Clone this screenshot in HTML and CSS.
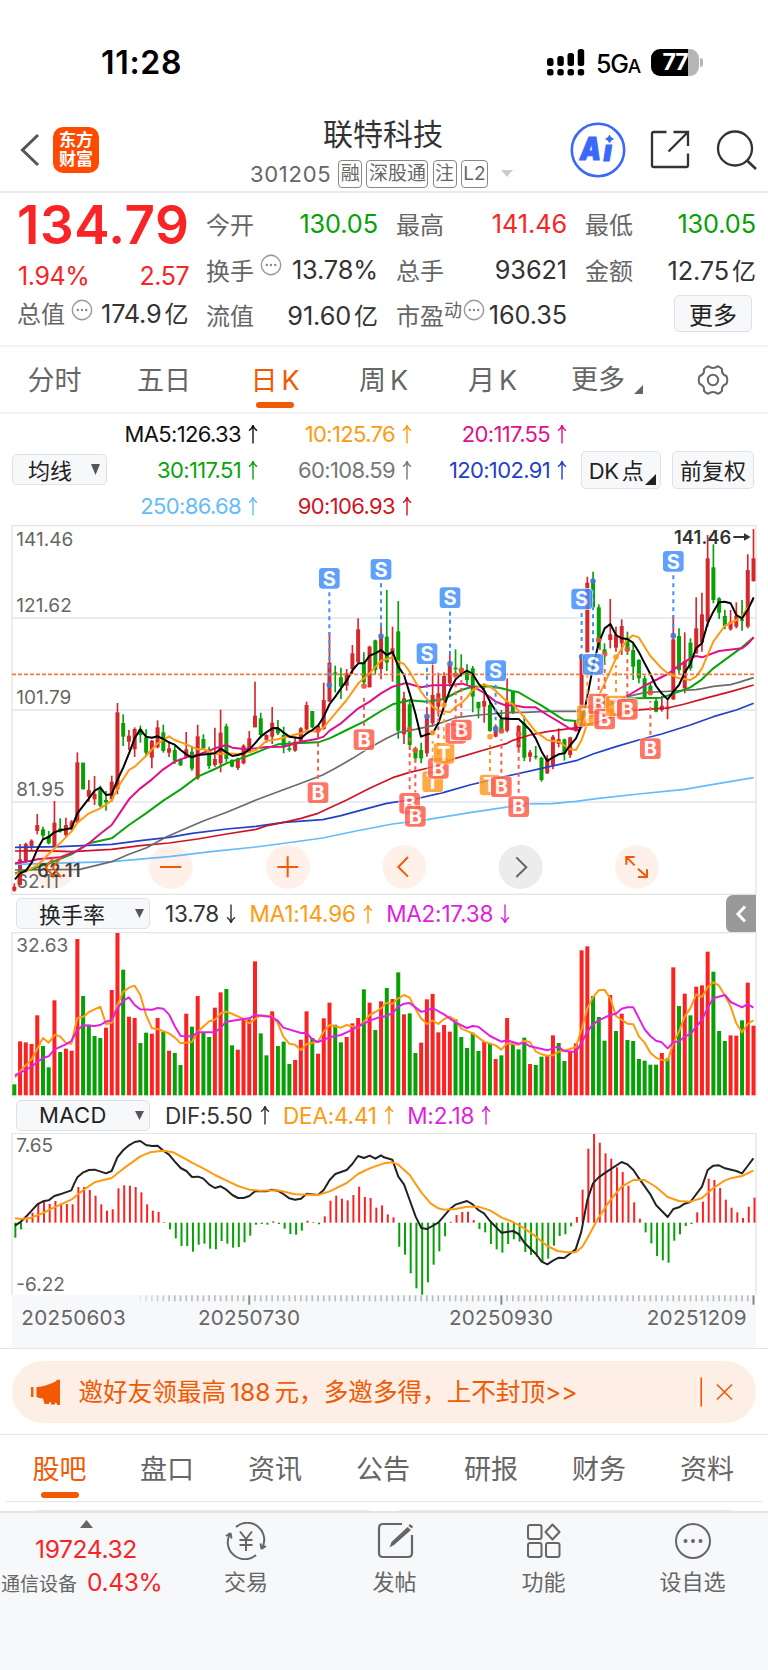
FILE: index.html
```html
<!DOCTYPE html>
<html lang="zh-CN">
<head>
<meta charset="utf-8">
<title>联特科技 301205</title>
<link rel="stylesheet" href="styles.css">
</head>
<body>
<svg class="defs" width="0" height="0">
  <symbol id="up" viewBox="0 0 10 20"><path d="M5 19.5V1.2M1 6.6Q4.2 4.6 5 1.2Q5.8 4.6 9 6.6" fill="none" stroke="currentColor" stroke-width="1.4"/></symbol>
  <symbol id="down" viewBox="0 0 10 20"><path d="M5 .5V18.8M1 13.4Q4.2 15.4 5 18.8Q5.8 15.4 9 13.4" fill="none" stroke="currentColor" stroke-width="1.4"/></symbol>
  <symbol id="info" viewBox="0 0 22 22"><circle cx="11" cy="11" r="9.7" fill="none" stroke="#999" stroke-width="1.4"/><g fill="#888"><circle cx="6.8" cy="11" r="1.2"/><circle cx="11" cy="11" r="1.2"/><circle cx="15.2" cy="11" r="1.2"/></g></symbol>
</svg>

<header class="status">
  <span class="clock">11:28</span>
  <div class="status-right">
    <svg width="38" height="27" viewBox="0 0 38 27"><g><rect x="0" y="9" width="6.500" height="8" rx="2.500"/><rect x="10.300" y="7" width="6.500" height="10" rx="2.500"/><rect x="20.500" y="4" width="6.500" height="13" rx="2.500"/><rect x="30.700" y="0" width="6.500" height="17" rx="2.500"/><rect x="0" y="20" width="6.500" height="6.500" rx="2.500"/><rect x="10.300" y="20" width="6.500" height="6.500" rx="2.500"/><rect x="20.500" y="20" width="6.500" height="6.500" rx="2.500"/><rect x="30.700" y="20" width="6.500" height="6.500" rx="2.500"/></g></svg>
    <span class="net">5G<small>A</small></span>
    <span class="battery"><b>77</b></span><i class="nub"></i>
  </div>
</header>

<nav class="topbar">
  <svg class="back" width="20" height="34" viewBox="0 0 20 34"><path d="M18 2L2.500 17L18 32" fill="none" stroke="#555" stroke-width="3"/></svg>
  <div class="logo"><span>东方</span><span>财富</span></div>
  <div class="heading">
    <h1>联特科技</h1>
    <div class="sub"><span class="code">301205</span><span class="tag">融</span><span class="tag">深股通</span><span class="tag">注</span><span class="tag">L2</span><i class="tri-light"></i></div>
  </div>
  <svg class="ai" width="56" height="56" viewBox="0 0 56 56"><circle cx="28" cy="28" r="26.200" fill="#fff" stroke="#3a68f9" stroke-width="2.600"/><g fill="#3a68f9" stroke="#3a68f9" font-weight="900" font-style="italic" font-size="31"><text x="10" y="38" textLength="21" lengthAdjust="spacingAndGlyphs" stroke-width="1.200">A</text><text x="33.500" y="38.500" font-size="28" stroke-width="1">ı</text></g><path d="M39.500 12.500Q40.600 16 44 17Q40.600 18 39.500 21.500Q38.400 18 35 17Q38.400 16 39.500 12.500Z" fill="#3a68f9"/></svg>
  <svg class="share" width="40" height="40" viewBox="0 0 40 40"><path d="M16.500 2H3.800Q2 2 2 3.800V35.200Q2 37 3.800 37H36.200Q38 37 38 35.200V23.500M23.500 2H38V16M37.500 2.500L18.500 21.500" fill="none" stroke="#333" stroke-width="2.300"/></svg>
  <svg class="find" width="41" height="40" viewBox="0 0 41 40"><circle cx="19" cy="18.500" r="17" fill="none" stroke="#333" stroke-width="2.300"/><path d="M31 30.500L40 39" stroke="#333" stroke-width="2.600"/></svg>
</nav>

<section class="quote">
  <div class="last">
    <div class="price">134.79</div>
    <div class="chg"><span>1.94%</span><span>2.57</span></div>
    <div class="kv"><label>总值</label><svg class="inf"><use href="#info"/></svg><b>174.9<em>亿</em></b></div>
  </div>
  <div class="col">
    <div class="kv"><label>今开</label><b class="green">130.05</b></div>
    <div class="kv"><label>换手</label><svg class="inf"><use href="#info"/></svg><b>13.78%</b></div>
    <div class="kv"><label>流值</label><b>91.60<em>亿</em></b></div>
  </div>
  <div class="col">
    <div class="kv"><label>最高</label><b class="red">141.46</b></div>
    <div class="kv"><label>总手</label><b>93621</b></div>
    <div class="kv pe"><label>市盈<sup>动</sup></label><svg class="inf"><use href="#info"/></svg><b>160.35</b></div>
  </div>
  <div class="col">
    <div class="kv"><label>最低</label><b class="green">130.05</b></div>
    <div class="kv"><label>金额</label><b>12.75<em>亿</em></b></div>
    <button class="btn more">更多</button>
  </div>
</section>

<nav class="periods">
  <span>分时</span><span>五日</span><span class="on">日<i>K</i></span><span>周<i>K</i></span><span>月<i>K</i></span>
  <span class="pmore">更多<svg width="9" height="9"><path d="M9 0V9H0Z" fill="#666"/></svg></span>
  <svg class="gear" width="32" height="32" viewBox="0 0 32 32"><path d="M11 2.200Q16 5.600 21 2.200Q23.500 3.200 25 5.200Q24.300 10.200 29.500 12.200Q31 16 29.500 19.800Q24.300 21.800 25 26.800Q23.500 28.800 21 29.800Q16 26.400 11 29.800Q8.500 28.800 7 26.800Q7.700 21.800 2.500 19.800Q1 16 2.500 12.200Q7.700 10.200 7 5.200Q8.500 3.200 11 2.200Z" fill="none" stroke="#666" stroke-width="2" stroke-linejoin="round"/><circle cx="16" cy="16" r="5.200" fill="none" stroke="#666" stroke-width="2"/></svg>
</nav>

<section class="mas">
  <button class="btn pick"><span>均线</span><svg width="9" height="11"><path d="M0 0H9L4.500 11Z" fill="#555"/></svg></button>
  <div class="ma-grid">
    <span class="c-black">MA5:126.33<svg><use href="#up"/></svg></span><span class="c-orange">10:125.76<svg><use href="#up"/></svg></span><span class="c-pink">20:117.55<svg><use href="#up"/></svg></span>
    <span class="c-green">30:117.51<svg><use href="#up"/></svg></span><span class="c-gray">60:108.59<svg><use href="#up"/></svg></span><span class="c-blue">120:102.91<svg><use href="#up"/></svg></span>
    <span class="c-sky">250:86.68<svg><use href="#up"/></svg></span><span class="c-crimson">90:106.93<svg><use href="#up"/></svg></span>
  </div>
  <button class="btn dk"><span>DK<em>点</em></span><svg width="11" height="11"><path d="M11 0V11H0Z" fill="#222"/></svg></button>
  <button class="btn adj"><span>前复权</span></button>
</section>

<svg id="price" class="chart" width="768" height="370" viewBox="0 15 2304 1110"></svg>

<section class="ind">
  <button class="btn sel"><span>换手率</span><svg width="9" height="9"><path d="M0 0H9L4.500 9Z" fill="#555"/></svg></button>
  <span class="c-ink">13.78<svg><use href="#down"/></svg></span>
  <span class="c-orange">MA1:14.96<svg><use href="#up"/></svg></span>
  <span class="c-magenta">MA2:17.38<svg><use href="#down"/></svg></span>
  <button class="fold"><svg width="12" height="20" viewBox="0 0 12 20"><path d="M10 2.500L3 10L10 17.500" fill="none" stroke="#fff" stroke-width="3"/></svg></button>
</section>
<svg id="turnover" class="chart" width="768" height="165" viewBox="0 126 2304 495"></svg>

<section class="ind macd">
  <button class="btn sel"><span class="lat">MACD</span><svg width="9" height="9"><path d="M0 0H9L4.500 9Z" fill="#555"/></svg></button>
  <span class="c-ink">DIF:5.50<svg><use href="#up"/></svg></span>
  <span class="c-orange">DEA:4.41<svg><use href="#up"/></svg></span>
  <span class="c-magenta">M:2.18<svg><use href="#up"/></svg></span>
</section>
<svg id="macd" class="chart" width="768" height="215" viewBox="0 129 2304 645"></svg>

<section class="promo">
  <div class="banner">
    <svg width="30" height="27" viewBox="0 0 30 27"><path d="M1.200 8V18" stroke="#f15a04" stroke-width="2.400"/><path d="M5.500 8Q15 7.500 25.500 2V.8H29V26H26V24.500L24 23.500V25.500H20V23L18 23.500V25H13.500L12 19.500Q8 19 5.500 18Z" fill="#f15a04"/></svg>
    <p>邀好友领最高<i>188</i>元，多邀多得，上不封顶&gt;&gt;</p>
    <svg class="close" width="34" height="30" viewBox="0 0 34 30"><path d="M1.200 .5V29.500M17 7.500L32 22.500M32 7.500L17 22.500" fill="none" stroke="#f15a04" stroke-width="1.600"/></svg>
  </div>
</section>

<nav class="tabs"><span class="on">股吧</span><span>盘口</span><span>资讯</span><span>公告</span><span>研报</span><span>财务</span><span>资料</span></nav>
<div class="peek"><i></i><i></i></div>

<footer class="dock">
  <div class="index">
    <svg width="13" height="8"><path d="M6.500 0L13 8H0Z" fill="#666"/></svg>
    <b>19724.32</b>
    <div><span>通信设备</span><b>0.43%</b></div>
  </div>
  <div class="act"><svg width="42" height="38" viewBox="0 0 42 38"><g fill="none" stroke="#666" stroke-width="2"><path d="M11 5A17 17 0 0 1 36.500 27M36.500 27L35.500 21.500M36.500 27L41 24M31 33A17 17 0 0 1 5.500 11M5.500 11L6.500 16.500M5.500 11L1 14"/><path d="M15 9.500L21 17L27 9.500M21 17V29M14.500 18H27.500M14.500 23H27.500"/></g></svg><span>交易</span></div>
  <div class="act"><svg width="38" height="38" viewBox="0 0 38 38"><path d="M26 2H7Q3 2 3 6V31Q3 35 7 35H32Q36 35 36 31V13" fill="none" stroke="#666" stroke-width="2.200"/><path d="M31.500 5L35 8L18 23L13.500 25.500L15.500 20Z" fill="#666"/><path d="M34 2L37 4.500L36 6.500L32.500 4Z" fill="#666"/></svg><span>发帖</span></div>
  <div class="act"><svg width="38" height="38" viewBox="0 0 38 38"><g fill="none" stroke="#666" stroke-width="2"><rect x="3" y="3" width="13.500" height="14" rx="2"/><rect x="3" y="21" width="13.500" height="14" rx="2"/><rect x="21" y="21" width="13.500" height="14" rx="2"/><path d="M27.500 2.500L34.500 10L27.500 17.500L20.500 10Z" stroke-linejoin="round"/></g></svg><span>功能</span></div>
  <div class="act"><svg width="38" height="38" viewBox="0 0 38 38"><circle cx="19" cy="19" r="17" fill="none" stroke="#666" stroke-width="2"/><g fill="#666"><circle cx="11.500" cy="19" r="2"/><circle cx="19" cy="19" r="2"/><circle cx="26.500" cy="19" r="2"/></g></svg><span>设自选</span></div>
</footer>
<script src="chart.js"></script>
</body>
</html>
```
FILE: styles.css
```css
* { box-sizing: border-box; }
body { margin: 0; width: 768px; height: 1670px; overflow: hidden; background: #fff; color: #333; font-family: Inter, "Noto Sans CJK SC", sans-serif; }
b, em, i { font-weight: 400; font-style: normal; }
svg { display: block; flex: none; }
.defs { position: absolute; }
.btn { font: inherit; color: #222; background: #f7f8fa; border: 1.500px solid #dfe1e6; border-radius: 5px; padding: 0; display: flex; align-items: center; justify-content: center; white-space: nowrap; }
.btn > span { margin-top: -2px; }
.red { color: #f92426; }
.green { color: #05a105; }

.status { height: 108px; padding: 16px 65px 0 101px; display: flex; justify-content: space-between; align-items: center; color: #000; }
.clock { font-size: 32px; font-weight: 600; letter-spacing: .7px; }
.status-right { display: flex; align-items: center; }
.net { font-size: 25px; font-weight: 500; margin: 3px 0 0 11px; width: 55px; letter-spacing: -1.200px; white-space: nowrap; }
.net small { font-size: 19px; }
.battery { width: 48px; height: 27px; border-radius: 9px; background: linear-gradient(90deg, #000 78%, #b5b5b5 78%); color: #fff; text-align: center; line-height: 27px; }
.battery b { font-size: 23px; font-weight: 700; letter-spacing: -1px; }
.nub { width: 3px; height: 9px; margin-left: 1px; background: #b5b5b5; border-radius: 0 3px 3px 0; }

.topbar { height: 85px; border-bottom: 2px solid #e9e9e9; display: grid; grid-template-columns: 53px 46px 471px 56px 64px 1fr; align-items: center; }
.back { margin-left: 20px; }
.logo { width: 46px; height: 46px; border-radius: 10px; background: #ff4a02; color: #fff; font-size: 17px; font-weight: 700; line-height: 19px; display: flex; flex-direction: column; align-items: center; justify-content: center; }
.heading { padding: 5px 0 0 94px; }
.heading h1 { margin: -1px 0 0 65px; padding-left: 10px; width: 240px; font-size: 30px; font-weight: 400; line-height: 36px; text-align: center; white-space: nowrap; }
.sub { display: flex; align-items: center; margin: 8px 0 0 57px; gap: 4.200px; height: 28px; font-size: 19px; color: #666; }
.code { font-size: 22px; letter-spacing: .7px; width: 84px; margin-right: 0; }
.tag { height: 28px; line-height: 25px; border: 1.500px solid #888; border-radius: 4px; padding: 0 1.500px; white-space: nowrap; }
.tri-light { border: 6.500px solid transparent; border-top: 7px solid #ccc; border-bottom: 0; margin-left: 9px; }
.share { margin-left: 24px; }
.find { margin-left: 26px; }

.quote { height: 154px; border-bottom: 2px solid #f4f4f4; padding: 8px 12px 0 17px; display: grid; grid-template-columns: 171px 172px 171px 171px; column-gap: 18px; }
.last { display: grid; grid-template-rows: 49px 41px 46px; width: 171px; }
.price { font-size: 53px; font-weight: 600; line-height: 49px; color: #f92426; letter-spacing: .5px; }
.chg { display: flex; justify-content: space-between; align-items: center; font-size: 25px; color: #f92426; letter-spacing: -.4px; padding: 11px 0 0 1px; }
.col { display: grid; grid-template-rows: 46px 45px 46px; margin-top: -1px; }
.kv { display: flex; align-items: center; height: 46px; font-size: 24px; letter-spacing: 0; white-space: nowrap; }
.last .kv { height: 46px; margin-top: -2px; }
.kv label { color: #666; letter-spacing: 0; }
.kv b { margin-left: auto; font-size: 25.300px; letter-spacing: -.1px; }
.kv em { margin-left: 3px; font-size: 24px; }
.inf { width: 22px; height: 22px; margin: -9px 0 0 6px; }
.last .inf { margin-top: -4px; }
.last .kv b { letter-spacing: -.2px; margin-right: 1px; }
.kv sup { font-size: 18px; line-height: 0; vertical-align: 8px; }
.pe .inf { margin-left: 1px; }
.more { width: 78px; height: 37px; font-size: 24px; margin: 4px 0 0 89px; }

.periods { height: 67px; border-bottom: 2px solid #f4f4f4; display: grid; grid-template-columns: 109px 110px 112px 105px 113px 129px 1fr; align-items: center; font-size: 27px; color: #666; }
.periods > span { height: 65px; line-height: 68px; text-align: center; white-space: nowrap; }
.periods i { margin-left: 4px; }
.on { color: #f15a04; }
.on::after { content: ""; display: block; width: 38px; height: 6px; border-radius: 3px; background: #f15a04; margin: -13px auto 0; }
.periods .pmore { display: flex; align-items: center; padding-left: 22px; }
.pmore svg { margin: 19px 0 0 9px; }
.gear { margin-left: 19px; }

.mas { height: 111px; display: grid; grid-template-columns: 95px 460px 80px 82px; padding-left: 12px; align-items: center; }
.mas .dk { margin-left: 14px; width: 80px; height: 38px; font-size: 22px; letter-spacing: -.4px; }
.mas .adj { margin-left: 25px; width: 82px; height: 38px; font-size: 22px; }
.dk em { margin-left: 3px; }
.dk svg { margin: 20px -3px 0 2px; }
.pick { height: 31px; width: 95px; font-size: 22px; padding-left: 9px; }
.pick svg { margin-left: 19px; }
.ma-grid { display: grid; grid-template-columns: 151px 154px 155px; grid-template-rows: 36px 36px 36px; font-size: 22px; letter-spacing: -.65px; }
.ma-grid span { display: flex; align-items: center; justify-content: flex-end; }
.ma-grid svg { width: 10px; height: 20px; margin-left: 7px; }
.c-black { color: #111; } .c-ink { color: #333; } .c-orange { color: #ff9a10; } .c-pink { color: #e0108a; } .c-green { color: #09a409; }
.c-gray { color: #777; } .c-blue { color: #2440c8; } .c-sky { color: #64bcfb; } .c-crimson { color: #ce1424; } .c-magenta { color: #e01ee0; }
.chart { font-family: Inter, sans-serif; }

.ind { height: 37px; display: flex; align-items: center; padding-left: 16px; font-size: 22.500px; }
.ind > span { display: flex; align-items: center; margin-left: 15px; white-space: nowrap; letter-spacing: -.2px; }
.ind > span + span { margin-left: 13.500px; }
.ind > span svg { width: 10px; height: 20px; margin-left: 7px; }
.sel { width: 134px; height: 31px; font-size: 22px; justify-content: flex-start; padding-left: 22px; }
.sel svg { margin-left: auto; margin-right: 5px; }
.sel .lat { letter-spacing: .4px; margin-top: 0; }
.fold { width: 30px; height: 38px; margin-left: auto; margin-right: 12px; border: 0; padding: 0 0 0 9px; background: #999; border-radius: 7px 0 0 7px; }
.macd { height: 36px; }

.promo { height: 87px; border: solid #e5e5e8; border-width: 1.500px 0; padding: 12px 12px 0; }
.banner { height: 62px; border-radius: 31px; background: #fdeee6; color: #f15a04; display: flex; align-items: center; padding: 0 22px 0 19px; font-size: 24.600px; }
.banner p { margin: -4px 0 0 17.500px; white-space: nowrap; }
.banner p i { margin: 0 4px; }
.close { margin-left: auto; }

.tabs { height: 67px; margin: 0 6px; border-bottom: 1.500px solid #e5e5e8; display: grid; grid-template-columns: 107px repeat(6, 108px); font-size: 27px; color: #666; text-align: center; line-height: 70px; }
.tabs .on::after { margin-top: -13px; }
.peek { height: 9px; display: flex; gap: 30px; padding: 8px 35px 0; }
.peek i { flex: 1; height: 1px; background: #fce3d6; }

.dock { height: 160px; border-top: 2px solid #e3e4e7; background: #f7f8fa; display: grid; grid-template-columns: 172px 148px 149px 149px 149px; font-size: 22px; color: #666; white-space: nowrap; }
.index { display: flex; flex-direction: column; align-items: center; padding-top: 7px; color: #f92426; }
.index b { font-size: 24.600px; line-height: 33px; letter-spacing: -.4px; }
.index > b { margin-top: 5px; }
.index div { display: flex; align-items: center; width: 172px; padding-left: 1px; }
.index div span { color: #666; font-size: 19px; margin-right: 10px; }
.act { display: flex; flex-direction: column; align-items: center; padding-top: 9px; }
.act span { margin-top: 6px; line-height: 32px; }
```
FILE: chart.js
```js
// Plot units are thirds of a CSS pixel; bars share one time axis.
const X0 = 43, STEP = 17.19;
const COLORS = { r: '#d5282d', g: '#05a105' };
const cx = i => X0 + STEP * i;
const line = (x1, y1, x2, y2, c, w, extra = '') => `<line x1="${x1}" y1="${y1}" x2="${x2}" y2="${y2}" stroke="${c}" stroke-width="${w}" ${extra}/>`;
const rect = (x, y, w, h, c, extra = '') => `<rect x="${x}" y="${y}" width="${w}" height="${h}" fill="${c}" ${extra}/>`;
const text = (x, y, s, size = 57, c = '#666', extra = '') => `<text x="${x}" y="${y}" font-size="${size}" fill="${c}" ${extra}>${s}</text>`;

// Each segment is [x offset, "x,y x,y ..."].
function curve(color, width, ...segs) {
  const pts = segs.flatMap(([dx, s]) => s.split(' ').map(p => { const [x, y] = p.split(',').map(Number); return [x + dx, y]; }));
  return `<polyline points="${pts.map(p => p.join()).join(' ')}" fill="none" stroke="${color}" stroke-width="${width}" stroke-linejoin="round"/>`;
}

// colour, high, body top, body bottom, low
const candles = `r1090,1100,1112,1115 r972,1018,1095,1095 r968,972,1025,1028 r958,962,978,990 r882,915,933,943 g920,928,947,960 g933,948,970,973 r843,908,978,978 g895,925,935,938 r893,915,945,950 r900,905,925,935 r697,727,908,908 g728,728,808,808 r780,810,830,845 r768,822,838,855 g797,810,857,862 g813,840,847,872 r767,785,838,845 r549,577,808,823 g583,609,650,678 r630,647,665,690 r622,627,688,711 g617,628,645,668 g628,652,698,707 r660,662,713,745 r601,622,682,685 g614,637,693,698 r663,685,698,711 g678,690,722,732 g715,718,736,738 r636,688,713,715 g678,695,746,752 r614,649,775,779 g643,657,685,690 g680,697,738,746 r623,717,735,740 r569,638,730,757 g611,619,717,727 g718,720,740,742 r713,716,744,750 r673,677,730,733 r633,655,695,697 r485,587,622,622 g578,595,645,655 r643,645,660,668 r561,608,650,672 g600,627,640,645 g620,645,680,700 g663,685,690,695 r650,665,692,695 r622,625,665,667 r545,555,628,630 g573,573,622,624 r615,618,632,655 r488,540,627,629 r336,428,545,545 g437,457,460,517 g443,472,500,537 r447,460,497,512 r375,400,447,462 r295,328,427,427 g397,427,487,495 r377,380,502,502 g359,361,450,463 r308,350,447,478 g210,350,428,453 r320,385,400,485 g243,334,632,656 r515,535,643,672 g537,553,675,690 g680,690,715,728 g668,690,715,730 r561,590,700,710 r425,525,610,620 r458,520,560,590 r457,468,540,560 r393,435,490,500 g388,443,448,465 g403,448,460,470 g433,458,480,495 g438,445,530,577 g545,546,565,595 r490,543,560,608 g540,555,633,635 r613,620,650,652 g570,597,635,637 r475,545,632,637 g513,515,580,582 r615,618,682,697 g587,610,713,723 r690,697,710,725 g678,708,712,718 g710,713,780,785 r705,715,760,762 r645,650,735,748 r625,657,672,682 g656,658,700,722 r650,652,705,713 r600,605,633,635 r403,410,600,600 r170,188,397,397 g155,183,262,270 g253,262,390,390 g370,388,400,433 r237,343,360,385 r320,345,383,395 r298,318,370,405 g335,358,390,405 g367,390,440,480 g418,420,475,490 g467,475,532,534 g487,497,520,522 g535,543,575,577 r528,557,570,575 r540,560,567,598 r285,358,538,540 g325,348,450,463 r337,423,505,520 g355,368,445,452 r232,325,400,402 r218,283,368,395 r45,115,305,320 g73,142,240,250 g232,235,278,297 g270,288,318,328 r270,305,328,332 r247,287,320,325 g240,298,303,332 r103,150,320,325 r27,115,183,185`.split(' ');

// side, marker centre x, y, signal dot y
const marks = [
  ['T', 1298, 785, 638], ['B', 1229, 850, 628], ['B', 1246, 889, 691], ['B', 1315, 745, 540], ['T', 1332, 700, 555],
  ['B', 1367, 640, 465], ['B', 1384, 630, 450], ['T', 1470, 795, 650], ['B', 1504, 800, 633], ['B', 1556, 860, 642],
  ['B', 954, 818, 630], ['B', 1092, 659, 498], ['T', 1762, 587, 430], ['B', 1796, 552, 360], ['B', 1814, 597, 402],
  ['T', 1848, 558, 411], ['B', 1882, 568, 388], ['B', 1951, 686, 518],
  ['S', 988, 175, 495], ['S', 1143, 148, 348], ['S', 1350, 233, 431], ['S', 1281, 401, 589], ['S', 1487, 452, 626],
  ['S', 1745, 237, 410], ['S', 1779, 433, 183], ['S', 2020, 124, 347]
];
const MARK = { S: ['#3f8efc', '#3f78dc'], B: ['#ff5b49', '#e85038'], T: ['#ff9a20', '#ff9a20'] };

let p = '';
for (const y of [294, 570, 846]) p += line(36, y, 2268, y, '#e3e6f0', 5);
p += `<rect x="36" y="17" width="2232" height="1106" fill="none" stroke="#e4e4e6" stroke-width="4"/>`;
for (const [x, c] of [[160, '#fff1e9'], [512, '#fff1e9'], [864, '#fff1e9'], [1213, '#fff1e9'], [1562, '#ececec'], [1911, '#fff1e9']]) p += `<circle cx="${x}" cy="1041" r="66" fill="${c}"/>`;
p += text(49, 77, '141.46') + text(49, 275, '121.62') + text(49, 551, '101.79') + text(49, 828, '81.95') + text(49, 1105, '62.11');
candles.forEach((s, i) => {
  const c = COLORS[s[0]], [h, t, b, l] = s.slice(1).split(',').map(Number);
  p += line(cx(i), h, cx(i), l, c, 5) + rect(cx(i) - 6, t, 12, Math.max(b - t, 4), c);
});
p += curve('#64bcfb', 5, [0, '45,1033 335,1025 507,1010 640,994 768,981'], [768, '135,963 200,954 300,933 410,912 513,899 641,878'], [1536, '0,859 20,852 120,851 192,844 260,835 380,822 518,808 604,793 725,773']);
p += curve('#2440c8', 5, [0, '45,982 180,980 335,973 421,962 507,952 576,940 680,927 768,919'], [768, '83,907 200,899 255,887 324,868 392,850 478,837 564,817 641,795 768,765'], [1536, '89,745 192,722 243,702 312,680 380,660 449,642 535,615 604,590 673,570 725,550']);
p += curve('#ce1424', 5, [0, '45,993 129,992 214,995 335,988 421,977 507,969 593,957 680,942 768,928'], [768, '31,918 83,907 135,895 186,880 272,840 341,805 410,773 461,757 530,741 599,715 684,690 753,670'], [1536, '0,662 54,645 106,635 200,622 260,605 346,573 398,568 467,564 518,552 587,533 656,515 725,495']);
p += curve('#6b6b6b', 5, [0, '45,1050 240,1048 335,1025 387,1003 440,983 500,950 559,925 610,903 680,877 768,840'], [768, '66,815 135,790 200,765 238,745 290,715 341,683 392,655 430,637 478,628 530,617 599,593 667,585 768,577'], [1536, '37,577 106,574 192,574 209,570 260,550 295,545 346,530 398,518 484,513 552,509 570,506 604,499 656,494 680,487 725,473']);
p += curve('#09a409', 6, [0, '45,1060 95,1048 146,1030 214,1003 267,970 335,955 352,942 387,915 438,880 490,842 542,808 593,770 645,747 679,730 731,712 768,698'], [768, '31,685 66,673 120,670 186,667 221,655 272,630 324,605 375,573 410,553 461,541 513,545 564,537 616,510 650,500 702,499 736,505 768,513'], [1536, '20,517 54,537 89,557 140,590 157,600 192,603 209,595 240,565 278,545 312,537 380,535 449,533 501,515 535,502 570,478 604,445 656,407 690,382 725,352']);
p += curve('#e0108a', 6, [0, '45,1030 95,1022 112,1018 180,1012 232,992 267,970 300,942 335,915 352,890 387,838 421,805 456,778 490,748 524,725 559,712 593,705 645,685 679,675 697,683 731,687 768,685'], [768, '31,681 83,680 135,665 186,656 203,650 221,632 255,610 307,565 341,545 375,520 410,500 450,489 495,502 530,496 582,495 620,491 660,505 684,518 719,545 753,558 768,555'], [1536, '37,562 71,562 106,585 140,605 175,627 200,630 226,600 260,570 346,528 398,497 432,480 467,462 501,437 535,415 552,408 570,412 621,393 690,385 707,372 725,352']);
p += curve('#ff9a10', 6, [0, '45,1062 78,1055 112,1035 129,1020 146,1002 180,970 214,935 232,908 267,880 301,865 335,842 352,805 387,750 404,740 438,708 473,670 507,649 524,660 559,673 593,688 610,687 645,702 680,700 714,702 748,697 768,690'], [768, '31,663 66,658 100,648 135,640 152,632 186,635 203,622 238,580 272,540 307,490 341,460 375,422 410,412 427,425 444,432 461,455 495,515 530,560 547,572 582,577 599,560 616,550 633,533 650,510 684,493 702,500 719,512 753,545 768,550'], [1536, '37,592 71,635 106,660 140,665 175,688 192,690 209,660 226,610 243,565 278,490 312,415 346,358 363,346 380,352 415,408 449,445 467,460 501,475 535,480 552,470 570,445 604,365 638,318 673,300 690,288 725,238']);
p += curve('#000', 6, [0, '45,1078 60,1060 78,1052 95,1028 112,988 129,958 146,951 163,937 180,931 214,925 232,880 250,857 267,835 284,812 301,803 318,825 335,823 352,780 370,742 387,700 404,655 421,628 438,650 456,653 473,649 490,657 507,667 524,674 542,690 559,703 576,712 593,705 628,702 645,700 662,686 679,697 697,708 714,705 731,700 748,688 765,670'], [768, '14,650 31,637 49,625 66,624 83,638 100,650 135,655 152,640 169,630 186,617 203,590 221,552 238,530 255,505 272,482 290,450 307,430 324,430 341,407 358,400 375,390 392,405 410,396 427,440 444,465 461,520 478,580 495,650 513,643 530,640 547,610 564,560 582,510 599,478 616,462 633,452 650,462 667,490 684,510 702,545 719,572 736,595 768,597'], [1536, '20,597 37,613 54,630 71,655 89,695 106,723 123,712 140,703 157,700 175,675 192,655 205,625 226,530 243,440 260,370 278,325 295,312 312,345 329,355 346,357 363,368 380,395 398,430 415,462 432,498 449,520 467,538 484,515 501,495 518,458 535,432 552,385 570,370 587,310 604,275 621,247 638,245 656,250 673,285 690,295 707,270 725,232']);
p += line(36, 463, 2268, 463, '#f47a3c', 5, 'stroke-dasharray="12 6"');
for (const [k, x, y, dot] of marks) {
  const [c, dc] = MARK[k], dir = dot > y ? 1 : -1;
  p += line(x, y + dir * 42, x, dot - dir * 25, c, 6, 'stroke-dasharray="12 12"') + `<circle cx="${x}" cy="${dot}" r="8.5" fill="${dc}" opacity=".9"/>`;
}
for (const [k, x, y] of marks) {
  p += `<g opacity=".83">${rect(x - 33, y - 33, 66, 66, '#fff', 'rx="12"')}${rect(x - 31, y - 31, 62, 62, MARK[k][0], 'rx="10"')}${text(x, y + 22, k, 60, '#fff', 'text-anchor="middle" font-weight="700"')}</g>`;
}
p += text(2022, 71, '141.46', 55, '#333', 'font-weight="600" textLength="172"') + `<path d="M2200 51H2244" stroke="#333" stroke-width="6"/><path d="M2232 40L2252 51L2232 62Z" fill="#333"/>`;
p += text(112, 1070, '62.11', 54, '#333', 'font-weight="600" textLength="130" opacity=".9"');
p += `<g fill="none" stroke="#f15a04" stroke-width="6"><path d="M162 1012L137 1042L162 1071M183 1012L158 1042L183 1071M480 1041H544M832 1041H895M863 1009V1072M1224 1011L1195 1041L1224 1070M1879 1034V1011H1904M1881 1013L1904 1036M1941 1048V1071H1914M1939 1069L1914 1046"/><path stroke="#666" d="M1549 1012L1579 1042L1549 1071"/></g>`;
document.getElementById('price').innerHTML = p;

const vols = 'g583 r454 r457 r462 r376 g468 g532 r331 g486 r476 r482 r147 g318 g404 g438 g444 r413 r300 r129 g239 r380 r384 g459 g428 r431 r384 g426 r482 g489 g525 r371 g410 r318 g428 g441 r353 r307 g297 g466 r479 r388 r388 r214 g430 g496 r364 g468 g455 g522 r510 r449 r364 g444 r491 r385 r338 g404 g457 r441 r400 r384 g298 r338 g420 r334 g294 r327 g247 r373 g370 g489 r458 r328 r312 r427 r405 r425 g388 g441 g474 g428 g483 r455 g460 r507 g496 r384 g462 g478 g443 r522 g525 g500 r498 r436 g459 g513 r485 r460 r181 r169 g318 g381 g452 r315 g423 r371 g450 g453 g507 g512 g524 g524 r489 g505 r232 g348 r311 g376 r290 r286 r185 g245 g423 g453 r436 r437 g391 r278 r407'.split(' ');
let v = `<path d="M36 621V128H2268V621" fill="none" stroke="#e4e4e6" stroke-width="4"/>` + text(49, 185, '32.63');
vols.forEach((s, i) => { const y = +s.slice(1); v += rect(cx(i) - 6, y, 12, 616 - y, s[0] === 'r' ? '#fb2222' : COLORS.g); });
v += curve('#ff9a10', 6, [0, '45,562 60,543 95,508 129,444 146,458 165,434 180,439 197,458 214,461 232,384 250,380 267,366 301,350 318,402 335,399 352,345 370,305 387,293 404,287 421,315 438,375 456,415 473,417 507,430 524,442 542,460 576,456 593,425 628,394 645,389 662,370 679,365 697,372 731,387 748,400 780,376 815,379 833,398 850,440 868,461 885,464 903,480 920,462 954,455 971,425 989,405 1023,413 1040,405 1074,413 1092,395 1109,375 1126,366 1143,355'], [1152, '8,338 25,341 43,325 60,315 77,323 95,358 111,385 129,402 146,392 163,402 180,387 197,380 214,390 232,416 266,430 300,455 335,466 352,479 369,460 404,464 421,452 438,457 456,485 473,493 490,497 507,496 524,485 558,477 575,472 592,420 610,355 627,322 644,301 661,299 679,325 696,378 730,401 748,403 765,440 782,458 799,488 816,503 833,510 851,511 868,460 885,425 902,380 919,355 937,313 954,321 971,292 988,277 1005,287 1023,317 1040,350 1057,400 1074,427 1091,402 1108,391']);
v += curve('#e31fe3', 6, [0, '45,556 95,530 112,516 129,504 146,499 163,479 197,463 214,453 232,420 250,406 284,408 301,405 318,395 335,390 352,355 370,332 387,322 404,345 421,358 456,359 473,354 490,356 507,373 524,408 542,438 576,439 593,427 645,427 662,413 679,395 731,387 748,385 765,375 815,381 833,392 850,413 903,429 920,429 937,448 954,456 989,442 1023,435 1040,427 1074,410 1109,392 1143,380'], [1152, '0,380 25,370 43,350 60,341 77,339 111,365 129,362 146,354 180,373 214,397 249,414 266,408 283,410 318,438 352,455 369,451 404,461 421,459 438,469 490,481 521,470 541,483 575,486 592,460 610,425 627,403 644,391 679,375 696,371 713,356 730,352 748,352 765,385 782,418 799,438 816,452 833,457 851,475 868,457 885,454 902,440 919,432 954,389 971,353 988,325 1023,315 1040,336 1074,352 1091,342 1108,353']);
document.getElementById('turnover').innerHTML = v;

const hist = '443 418 388 368 340 336 342 333 340 342 343 291 291 300 317 343 362 358 295 286 287 291 307 343 362 366 396 418 445 468 468 485 464 461 476 478 453 461 473 471 457 437 404 402 404 394 402 416 432 434 422 392 396 403 379 332 317 326 331 315 290 321 324 353 346 373 382 470 494 550 595 614 577 524 484 439 395 375 366 365 390 417 427 462 478 488 462 448 455 486 495 500 515 506 467 438 433 409 381 299 176 132 158 190 206 232 246 287 337 386 427 460 498 511 518 452 433 408 402 367 335 266 270 294 329 353 367 384 350 323'.split(' ').map(Number);
let m = `<path d="M36 615V130H2268V615" fill="none" stroke="#e4e4e6" stroke-width="4"/>` + rect(36, 615, 2232, 165, '#f7f8fa') + text(49, 186, '7.65') + text(49, 604, '-6.22');
hist.forEach((y, i) => { m += line(cx(i) + 3, 398, cx(i) + 3, y, y < 398 ? '#fb2222' : COLORS.g, 6); });
m += curve('#222', 6, [0, '45,407 63,395 80,378 95,362 112,343 129,334 146,331 163,318 180,313 214,301 223,280 232,262 250,247 267,240 284,239 318,250 335,243 352,202 370,180 387,166 404,156 421,153 438,165 456,168 473,167 490,182 507,194 524,214 542,234 559,243 576,261 595,260 610,266 628,284 645,294 662,289 679,299 697,315 714,324 731,324 748,318 765,304 800,304 815,299 833,302 850,312 868,325 885,329 903,326 920,311 954,315 971,300 989,270 1006,252 1040,240 1057,222 1074,198 1092,204 1109,197 1126,206 1143,196'], [1152, '0,202 25,209 43,260 60,283 77,330 95,380 112,414 129,417 163,398 197,358 214,344 249,333 266,343 283,360 300,370 318,393 352,428 387,423 404,432 421,458 456,492 473,515 490,523 507,512 524,503 541,504 575,478 592,425 610,330 627,280 644,262 661,250 679,238 713,216 730,223 748,240 765,265 799,313 816,345 851,381 868,357 885,352 902,341 919,336 954,290 971,240 988,227 1005,226 1023,235 1057,243 1074,250 1091,228 1108,205']);
m += curve('#ff9a10', 6, [0, '45,385 63,387 95,383 129,369 163,352 214,329 250,300 284,277 335,264 370,236 421,199 450,187 490,182 520,187 559,208 576,218 610,235 645,255 680,272 714,288 748,299 780,302 833,301 885,313 954,315 989,304 1040,279 1074,252 1109,235 1151,220'], [1152, '25,217 43,224 77,255 112,307 140,340 163,355 180,359 214,357 249,350 283,350 318,361 352,382 387,396 421,415 456,440 490,468 521,483 550,487 575,487 595,470 610,445 644,382 679,330 713,290 748,270 782,270 816,291 851,321 885,333 919,335 954,324 988,294 1023,271 1040,265 1074,258 1108,242']);
for (let i = 22; i < 130; i++) {
  const major = i === 41 || i === 85 || i === 129;
  m += line(cx(i), 616, cx(i), major ? 644 : 634, major ? '#888' : '#bbb', major ? 6 : 5, `opacity="${Math.min(1, (i - 20) / 8)}"`);
}
[[64, '20250603', 313], [594, '20250730', 306], [1347, '20250930', 312], [1940, '20251209', 300]].forEach(([x, s, w]) => { m += text(x, 706, s, 62, '#666', `textLength="${w}"`); });
document.getElementById('macd').innerHTML = m;
```
